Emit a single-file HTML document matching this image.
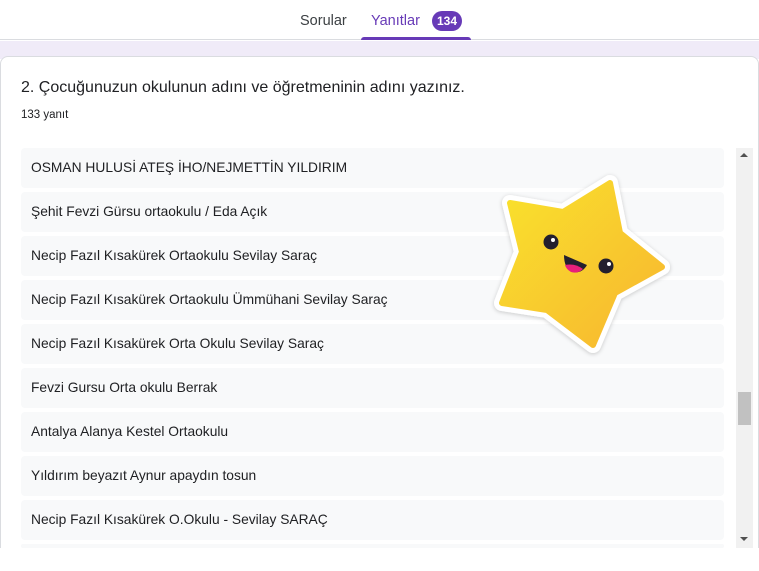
<!DOCTYPE html>
<html><head><meta charset="utf-8"><style>
*{margin:0;padding:0;box-sizing:border-box}
body{width:759px;height:571px;overflow:hidden;background:#fff;font-family:"Liberation Sans",Arial,sans-serif;position:relative}
.tabs{position:absolute;top:0;left:0;width:759px;height:40px;background:#fff;border-bottom:1px solid #dadce0}
.tab{position:absolute;top:13px;font-size:14.5px;color:#3c4043}
.band{position:absolute;top:41px;left:0;width:759px;height:18px;background:#f0ebf8}
.card{position:absolute;top:56px;left:0;width:759px;height:515px;background:#fff;border:1px solid #dadce0;border-radius:8px 8px 0 0}
.q{position:absolute;left:21px;top:79px;font-size:16px;color:#202124}
.n{position:absolute;left:21px;top:109px;font-size:11.5px;color:#202124}
.row{position:absolute;left:21px;width:703px;height:40px;background:#f8f9fa;border-radius:4px;font-size:13.8px;color:#202124;padding:12px 0 0 10px;white-space:nowrap}
.sb{position:absolute;left:736px;top:148px;width:17px;height:400px;background:#f1f1f1}
</style></head><body>
<div class="tabs">
<div class="tab" style="left:300px">Sorular</div>
<div class="tab" style="left:371px;color:#673ab7">Yanıtlar</div>
<div style="position:absolute;left:432px;top:11px;width:30px;height:20px;border-radius:10px;background:#673ab7;color:#fff;font-size:12px;font-weight:bold;text-align:center;line-height:20px">134</div>
<div style="position:absolute;left:361px;top:37px;width:110px;height:3px;background:#673ab7;border-radius:3px 3px 0 0"></div>
</div>
<div class="band"></div>
<div class="card"></div>
<div class="q">2. Çocuğunuzun okulunun adını ve öğretmeninin adını yazınız.</div>
<div class="n">133 yanıt</div>
<div class="row" style="top:148px">OSMAN HULUSİ ATEŞ İHO/NEJMETTİN YILDIRIM</div>
<div class="row" style="top:192px">Şehit Fevzi Gürsu ortaokulu / Eda Açık</div>
<div class="row" style="top:236px">Necip Fazıl Kısakürek Ortaokulu Sevilay Saraç</div>
<div class="row" style="top:280px">Necip Fazıl Kısakürek Ortaokulu Ümmühani Sevilay Saraç</div>
<div class="row" style="top:324px">Necip Fazıl Kısakürek Orta Okulu Sevilay Saraç</div>
<div class="row" style="top:368px">Fevzi Gursu Orta okulu Berrak</div>
<div class="row" style="top:412px">Antalya Alanya Kestel Ortaokulu</div>
<div class="row" style="top:456px">Yıldırım beyazıt Aynur apaydın tosun</div>
<div class="row" style="top:500px">Necip Fazıl Kısakürek O.Okulu - Sevilay SARAÇ</div>
<div class="row" style="top:544px;height:4px;padding:0"></div>
<div style="position:absolute;left:0;top:548px;width:759px;height:23px;background:#fff"></div>
<div class="sb">
<div style="position:absolute;left:4px;top:5px;width:0;height:0;border-left:4px solid transparent;border-right:4px solid transparent;border-bottom:4px solid #505050"></div>
<div style="position:absolute;left:2px;top:244px;width:13px;height:33px;background:#c1c1c1"></div>
<div style="position:absolute;left:4px;top:389px;width:0;height:0;border-left:4px solid transparent;border-right:4px solid transparent;border-top:4px solid #505050"></div>
</div>
<svg style="position:absolute;left:0;top:0" width="759" height="571">
<defs><linearGradient id="g" x1="0" y1="0" x2="1" y2="1"><stop offset="0" stop-color="#f9e22c"/><stop offset="1" stop-color="#f8b530"/></linearGradient>
<filter id="s"><feDropShadow dx="0" dy="1" stdDeviation="2" flood-opacity="0.2"/></filter></defs>
<polygon filter="url(#s)" points="610,183 620,233 662,267 615,293 593,345 547,310 502,303 522,252 510,203 563,212" fill="url(#g)" stroke="#fff" stroke-width="16" stroke-linejoin="round"/>
<polygon points="610,183 620,233 662,267 615,293 593,345 547,310 502,303 522,252 510,203 563,212" fill="url(#g)" stroke="url(#g)" stroke-width="6" stroke-linejoin="round"/>
<circle cx="551" cy="242" r="7.5" fill="#231f2e"/><circle cx="553" cy="240" r="2" fill="#fff"/>
<circle cx="606" cy="266" r="7.5" fill="#231f2e"/><circle cx="609" cy="264" r="2" fill="#fff"/>
<path d="M564,255 L587,265 Q582,274 572,272 Q564,268 564,255 Z" fill="#231f2e"/>
<path d="M565,265 Q575,263 583,269 Q578,274 571,272 Q566,269 565,265 Z" fill="#e8207a"/>
</svg>
</body></html>
